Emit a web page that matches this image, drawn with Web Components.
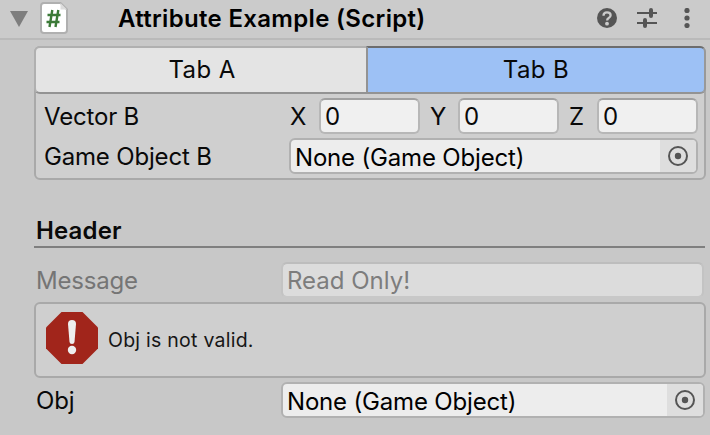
<!DOCTYPE html>
<html lang="en">
<head>
<meta charset="utf-8">
<title>Attribute Example</title>
<style>
html,body{margin:0;height:100%;overflow:hidden;background:#c8c8c8}
body{font:24px/28px Inter,"Liberation Sans",sans-serif;color:#090909}
</style>
</head>
<body>
<inspector-panel></inspector-panel>
<script>
function define(name, html) {
  const t = document.createElement('template');
  t.innerHTML = html;
  customElements.define(name, class extends HTMLElement {
    constructor() {
      super();
      this.attachShadow({mode: 'open'}).appendChild(t.content.cloneNode(true));
    }
  });
}

define('component-header', `
<style>
:host{display:flex;box-sizing:border-box;height:40px;padding:0 13px 0 10px;background:#cbcbcb;border-bottom:2px solid #bababa;font-weight:600;color:#000}
svg{display:block;flex:none}
.fold{margin-top:11px}
.file{margin:2px 0 0 12px}
.title{margin:5px auto 0 50px;white-space:nowrap;letter-spacing:.32px}
.icons{display:flex;gap:20px;padding-top:8px}
</style>
<svg class="fold" width="18" height="16"><path d="M0 0H18L9 16Z" fill="#7e7e7e"/></svg>
<svg class="file" width="28" height="32"><path d="M4 1H20.500L27 7.500V28a3 3 0 0 1-3 3H4a3 3 0 0 1-3-3V4a3 3 0 0 1 3-3Z" fill="#fff" stroke="#b0b0b0" stroke-width="2"/><path d="M20.500 1V7.500H27Z" fill="#ddd"/><path d="M12.300 8L9.500 25M18.300 8L15.500 25M7.500 13H20.500M6.500 20H19.500" stroke="#3c7a38" stroke-width="2.400" fill="none"/></svg>
<span class="title"><slot></slot></span>
<div class="icons">
<svg width="20" height="20"><circle cx="10" cy="10" r="10" fill="#555"/><path d="M6.500 7.800Q6.500 4.300 10 4.300Q13.600 4.300 13.600 7.200Q13.600 8.800 11.700 9.900Q10.100 10.900 10.100 12.500" fill="none" stroke="#cbcbcb" stroke-width="2.300"/><circle cx="10" cy="15.700" r="1.900" fill="#cbcbcb"/></svg>
<svg width="20" height="20" style="overflow:visible"><path d="M0 5H10M16 5H20M0 15H4M10 15H20" stroke="#555" stroke-width="2"/><path d="M14 2V8M8 12V18" stroke="#555" stroke-width="4" stroke-linecap="round"/><path d="M10 5H16M4 15H10" stroke="#555" stroke-width="2"/></svg>
<svg width="20" height="20"><g fill="#555"><circle cx="10" cy="2.500" r="2.600"/><circle cx="10" cy="10" r="2.600"/><circle cx="10" cy="17.500" r="2.600"/></g></svg>
</div>`);

define('tab-bar', `
<style>
:host{display:flex;height:48px;margin:-2px -2px 0;letter-spacing:.4px}
::slotted(*){box-sizing:border-box;padding-top:8px;text-align:center;border:2px solid #b0b0b0;border-bottom-color:#939393}
::slotted(:first-child){width:332px;padding-left:2px;border-right:0;border-radius:6px 0 0 6px;background:#e4e4e4}
::slotted(:last-child){flex:1;border-color:#6d6d6d #999 #939393 #939393;border-radius:0 6px 6px 0;background:#9dc1f5}
</style><slot></slot>`);

define('tab-button', `<style>:host{display:block}</style><slot></slot>`);

define('group-box', `
<style>:host{display:block;box-sizing:border-box;border:2px solid #a9a9a9;border-radius:6px;background:#cfcfcf}</style><slot></slot>`);

define('property-row', `
<style>
:host{display:flex;height:36px;white-space:nowrap}
.label{width:var(--label,245px);flex:none;padding-top:5px;box-sizing:border-box;letter-spacing:-.18px}
.value{display:flex;flex:1}
</style><div class="label"><slot name="label"></slot></div><div class="value"><slot></slot></div>`);

define('text-field', `
<style>
:host{display:block;box-sizing:border-box;height:36px;flex:1;padding:3px 0 0 4px;border:2px solid #b7b7b7;border-top-color:#a0a0a0;border-radius:6px;background:#f0f0f0}
:host([disabled]){border-color:#bdbdbd #c3c3c3 #c8c8c8 #c3c3c3;background:#dcdcdc;background-clip:padding-box;color:#7d7d7d}
</style><slot></slot>`);

define('vector-field', `
<style>
:host{display:flex;flex:1}
span{box-sizing:border-box;padding-top:5px}
span:nth-of-type(1){width:30px;padding-left:1px}
span:nth-of-type(n+2){width:38px;padding-left:10px}
text-field{width:101px;flex:none}
</style><span>X</span><text-field>0</text-field><span>Y</span><text-field>0</text-field><span>Z</span><text-field>0</text-field>`);

define('object-field', `
<style>
:host{display:flex;box-sizing:border-box;height:36px;flex:1;border:2px solid #b1b1b1;border-radius:6px;background:#ededed;overflow:hidden}
.text{flex:1;padding:4px 0 0 4px;color:#000;white-space:nowrap;letter-spacing:-.18px}
.pick{width:36px;background:#dedede}
svg{display:block;margin:6px 0 0 8px}
</style><div class="text"><slot></slot></div><div class="pick"><svg width="20" height="20"><circle cx="10" cy="10" r="9" fill="none" stroke="#555" stroke-width="2"/><circle cx="10" cy="10" r="3.200" fill="#555"/></svg></div>`);

define('section-header', `
<style>:host{display:block;box-sizing:border-box;height:31px;padding-left:2px;font-weight:600;border-bottom:2px solid #7f7f7f;letter-spacing:.15px}</style><slot></slot>`);

define('help-box', `
<style>
:host{display:flex;box-sizing:border-box;height:76px;padding:8px 10px;border:2px solid #a9a9a9;border-radius:6px;background:#cfcfcf;color:#161616;font-size:19.5px}
svg{display:block;flex:none}
.text{padding:14px 0 0 10px;letter-spacing:.25px}
</style><svg width="52" height="52"><path d="M15.500 0H36.500L52 15.500V36.500L36.500 52H15.500L0 36.500V15.500Z" fill="#a1251b"/><path d="M22 12Q22 8 26 8Q30 8 30 12L28.500 30Q28.300 32 26 32Q23.700 32 23.500 30Z" fill="#eee"/><circle cx="26" cy="38" r="4.200" fill="#eee"/></svg><div class="text"><slot></slot></div>`);

define('inspector-panel', `
<style>
:host{display:block;width:710px;height:435px}
main{padding:6px 4px 0 34px}
group-box{height:134px}
.rows{display:grid;gap:4px;padding:4px 6px 0 8px}
section-header{margin:37px 1px 0 0}
.message{--label:245px;margin:14px 2px 0 2px;color:#757575}
help-box{margin-top:4px}
.obj{--label:245px;margin:4px 1px 0 2px}
</style>
<component-header>Attribute Example (Script)</component-header>
<main>
<group-box>
<tab-bar><tab-button>Tab A</tab-button><tab-button>Tab B</tab-button></tab-bar>
<div class="rows">
<property-row><span slot="label">Vector B</span><vector-field></vector-field></property-row>
<property-row><span slot="label">Game Object B</span><object-field>None (Game Object)</object-field></property-row>
</div>
</group-box>
<section-header>Header</section-header>
<property-row class="message"><span slot="label">Message</span><text-field disabled>Read Only!</text-field></property-row>
<help-box>Obj is not valid.</help-box>
<property-row class="obj"><span slot="label">Obj</span><object-field>None (Game Object)</object-field></property-row>
</main>`);
</script>
</body>
</html>
